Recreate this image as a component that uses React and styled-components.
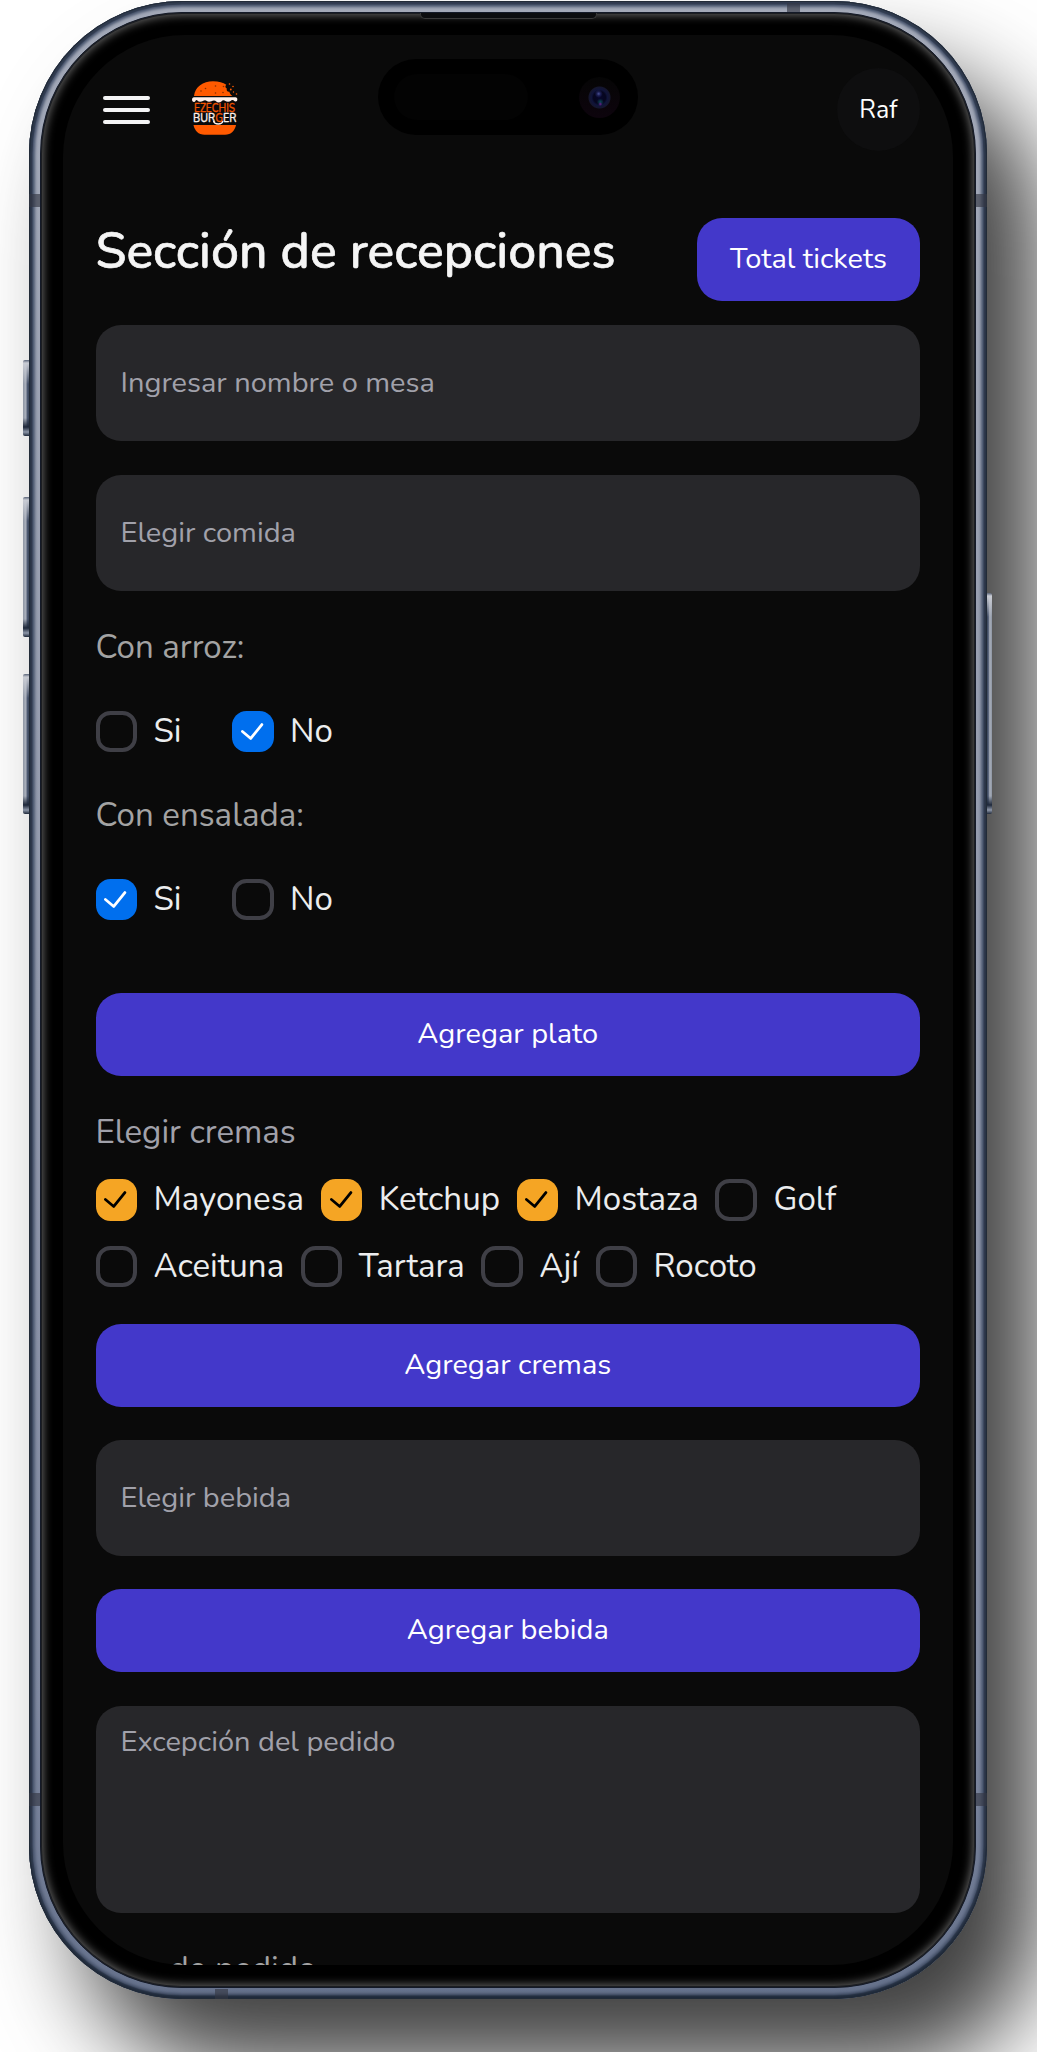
import React, { useState } from "react";
import styled, { createGlobalStyle, css } from "styled-components";

const GlobalStyle = createGlobalStyle`
  *, *::before, *::after { box-sizing: border-box; }
  body {
    margin: 0;
    background: #fff;
    font-family: "Nunito", "Lato", sans-serif;
    color: #ecedee;
  }
  button, input, textarea { font: inherit; }
`;

const Stage = styled.main`
  width: 1037px;
  height: 2052px;
  padding: 1px 50px 52px 29px;
  overflow: hidden;
`;

/* ---------- device ---------- */

const Phone = styled.div`
  position: relative;
  width: 958px;
  height: 1998px;
  padding: 11px;
  border-radius: 153px;
  background: linear-gradient(180deg, #a3a9b8 0%, #9299ac 50%, #8089a0 85%, #66728c 100%);
  box-shadow:
    inset 0 0 0 1px #222b38,
    inset 0 -2px 3px 1px #1d2838,
    inset 0 0 1px 3.5px #313c50,
    inset 0 0 3px 6px #4c5870,
    53px 70px 94px rgba(0, 0, 0, 0.75);
`;

const Bezel = styled.div`
  position: relative;
  height: 100%;
  padding: 22px;
  border: 1px solid #141a28;
  border-radius: 142px;
  background: #000;
  box-shadow: inset 0 0 0 1px #1c1e22, inset 0 0 10px 2px #6a6a6a;
`;

const Screen = styled.div`
  position: relative;
  height: 1930px;
  overflow: hidden;
  border-radius: 122px;
  background: #0a0a0a;
`;

const Antenna = styled.span`
  position: absolute;
  background: rgba(52, 56, 68, 0.65);
  ${({ $side }) => ($side === "top" || $side === "bottom"
    ? css`width: 13px; height: 10px;`
    : css`width: 11px; height: 13px;`)}
  ${({ $side }) => css`${$side}: ${$side === "top" ? 2 : 0}px;`}
  ${({ $side, $at }) => ($side === "top" || $side === "bottom"
    ? css`left: ${$at}px;`
    : css`top: ${$at}px;`)}
`;

const SideKey = styled.span`
  position: absolute;
  top: ${({ $top }) => $top}px;
  height: ${({ $height }) => $height}px;
  width: ${({ $side }) => ($side === "left" ? 6 : 5)}px;
  ${({ $side }) => ($side === "left"
    ? css`left: -6px; border-radius: 2px 0 0 2px;`
    : css`right: -5px; border-radius: 0 2px 2px 0;`)}
  background:
    linear-gradient(180deg, #5a6478 0, #c9ccd4 3px, rgba(201, 204, 212, 0) 24px,
      rgba(30, 40, 58, 0) calc(100% - 18px), #1e283a calc(100% - 9px), #8d96a8 calc(100% - 4px), #1e283a 100%),
    linear-gradient(${({ $side }) => ($side === "left" ? "90deg" : "270deg")}, #8e96a4, #a9afbb 45%, #4c5870 75%, #3a465c);
`;

const Speaker = styled.span`
  position: absolute;
  top: 0;
  left: 379px;
  width: 177px;
  height: 6px;
  border: 1px solid #3a3a3a;
  border-top: 0;
  border-radius: 0 0 5px 5px;
  background: #0c0d0f;
`;

const Island = styled.div`
  position: absolute;
  top: 24px;
  left: 315px;
  display: flex;
  align-items: center;
  justify-content: space-between;
  width: 260px;
  height: 76px;
  padding: 0 18px 0 16px;
  border-radius: 38px;
  background: #000;
`;

const Sensor = styled.span`
  width: 134px;
  height: 46px;
  border-radius: 23px;
  background: #030303;
`;

const Lens = styled.span`
  width: 41px;
  height: 41px;
  border-radius: 50%;
  background:
    radial-gradient(circle at 48% 41%, #4a5196 0, rgba(40, 44, 110, 0.6) 2px, transparent 4px),
    radial-gradient(circle at 52% 66%, #6a1c8c 0, transparent 2px),
    radial-gradient(circle at 52% 61%, #0c4a58 0, transparent 3.5px),
    radial-gradient(circle at 50% 50%, #07072c 0, #06061e 6px, #10143a 8px, #15162e 10.5px, transparent 11.5px),
    linear-gradient(180deg, #050505, #0d040d);
`;

/* ---------- app ---------- */

const Content = styled.div`
  display: flex;
  flex-direction: column;
  padding: 33px 33px 0 32.5px;
`;

const Header = styled.header`
  display: flex;
  align-items: center;
  height: 83px;
  margin-bottom: 66.5px;
`;

const MenuButton = styled.button`
  display: flex;
  flex-direction: column;
  justify-content: space-between;
  width: 47px;
  height: 28px;
  margin: 0 42px 0 7.5px;
  padding: 0;
  border: 0;
  background: none;
`;

const MenuBar = styled.span`
  height: 4px;
  border-radius: 2px;
  background: #f4f4f5;
`;

const Avatar = styled.div`
  display: flex;
  align-items: center;
  justify-content: center;
  width: 83px;
  height: 83px;
  margin-left: auto;
  border-radius: 50%;
  background: #0e0e0f;
  color: #fff;
  font-size: 25px;
`;

const TitleRow = styled.div`
  display: flex;
  align-items: flex-start;
  justify-content: space-between;
  margin-bottom: 24.5px;
`;

const Title = styled.h1`
  margin: 0;
  padding-top: 1px;
  color: #f5f5f5;
  font-size: 50px;
  font-weight: 500;
  line-height: 66.4px;
  -webkit-text-stroke: 0.7px #f5f5f5;
`;

const Button = styled.button`
  height: 83px;
  padding: 0 33px 1px;
  border: 0;
  border-radius: 25px;
  background: #4338ca;
  color: #fff;
  font-size: 29px;
  line-height: 40px;
  ${({ $gap }) => $gap && css`margin-bottom: ${$gap}px;`}
`;

const fieldStyle = css`
  display: block;
  width: 100%;
  margin: 0;
  border: 0;
  border-radius: 25px;
  outline: 0;
  background: #27272a;
  color: #ecedee;
  font-size: 29px;
  &::placeholder { color: #a1a1aa; opacity: 1; }
`;

const Field = styled.input`
  ${fieldStyle}
  height: 116px;
  padding: 0 25px 1px;
  margin-bottom: ${({ $gap }) => $gap}px;
`;

const Notes = styled.textarea`
  ${fieldStyle}
  height: 207px;
  margin-bottom: 32px;
  padding: 15px 25px;
  line-height: 41.4px;
  resize: none;
`;

const Caption = styled.p`
  margin: 0 0 ${({ $gap }) => $gap}px;
  color: ${({ $cool }) => ($cool ? "#a1a1aa" : "#a3a3a3")};
  font-size: 33.1px;
  line-height: 50px;
`;

const ListCaption = styled(Caption)`
  margin-left: -5px;
`;

const Choices = styled.div`
  display: flex;
  flex-wrap: wrap;
  gap: ${({ $row }) => $row || 0}px ${({ $col }) => $col}px;
  margin-bottom: ${({ $gap }) => $gap}px;
`;

const Option = styled.label`
  display: flex;
  align-items: center;
  gap: 16.5px;
  height: 41.5px;
  color: #ecedee;
  font-size: 33.1px;
  line-height: 41.5px;
`;

const HiddenCheck = styled.input`
  position: absolute;
  opacity: 0;
  pointer-events: none;
`;

const Box = styled.span`
  display: flex;
  align-items: center;
  justify-content: center;
  width: 41.5px;
  height: 41.5px;
  border-radius: 14.5px;
  ${({ $on, $tone }) => ($on
    ? css`
        background: ${$tone === "warning" ? "#f5a524" : "#006fee"};
        color: ${$tone === "warning" ? "#000" : "#fff"};
      `
    : css`border: 4px solid #3f3f46;`)}
`;

const LogoMark = styled.svg`
  width: 46px;
  height: 56px;
  margin-bottom: 4px;
  overflow: visible;
`;

function Check({ label, initial, tone }) {
  const [on, setOn] = useState(!!initial);
  return (
    <Option>
      <HiddenCheck type="checkbox" checked={on} onChange={() => setOn(!on)} />
      <Box $on={on} $tone={tone}>
        {on && (
          <svg width="23.7" height="25" viewBox="0 0 17 18" fill="none" stroke="currentColor"
            strokeWidth="2" strokeLinecap="round" strokeLinejoin="round">
            <polyline points="1 9 7 14 15 4" />
          </svg>
        )}
      </Box>
      {label}
    </Option>
  );
}

function Logo() {
  return (
    <LogoMark viewBox="0 0 46 56" aria-label="Ezechis Burger">
      <path d="M2 16C3 7 11 1.3 21 1.3c6 0 10 1.400 13.300 3.400-1.300 1.300-1.200 3 .5 3.800-.6 2.400 1 3.600 2.600 3.300 .2 2 1.800 3.200 3 4.200z" fill="#ff5a00" />
      <g fill="#ff5a00">
        <circle cx="37.500" cy="4" r=".8" /><circle cx="41" cy="6.500" r=".8" />
        <circle cx="38.800" cy="9.500" r=".9" /><circle cx="41.500" cy="12" r=".7" /><circle cx="44.500" cy="14" r=".8" />
      </g>
      <g fill="#8a3000">
        <circle cx="9" cy="11" r=".8" /><circle cx="13.500" cy="8.500" r=".8" />
        <circle cx="23.500" cy="6" r=".8" /><circle cx="23.500" cy="13" r=".8" />
        <circle cx="31" cy="12.500" r=".8" /><circle cx="31.500" cy="6.500" r=".8" />
      </g>
      <path d="M2 17.200H43.500C46 17.200 46 21.500 43.500 21.500 42 21.500 42 20 40.500 20 39 20 38.500 21.800 36 21.800 33.500 21.800 33 20.200 31.500 20.200 30 20.200 29 22.500 26.500 22.500 24.500 22.500 24 20.500 22 20.500 20 20.500 19 21.800 17 21.800 15 21.800 14.500 20.200 13 20.200 11.500 20.200 10.500 21.800 8 21.800 6 21.800 5.500 20 4.500 20 3.500 20 3.500 22 2 22-.6 22-.6 17.200 2 17.200z" fill="#fff1ea" />
      <g fontFamily="Nunito, Lato, sans-serif" fontSize="12.500" fontWeight="500" strokeWidth=".3">
        <text x="2" y="31.500" textLength="41" lengthAdjust="spacingAndGlyphs" fill="#f25500" stroke="#f25500">EZECHIS</text>
        <text x="1" y="42" textLength="43.500" lengthAdjust="spacingAndGlyphs" fill="#fff1ea" stroke="#fff1ea">
          BUR<tspan fill="#f25500" stroke="#f25500">G</tspan>ER
        </text>
      </g>
      <path d="M21.500 41C22.500 45 30 45 31 41" fill="none" stroke="#fff1ea" strokeWidth="1.300" />
      <path d="M1.500 45H44C43 50.500 39 54.800 33 54.800H12.500C6.500 54.800 2.500 50.500 1.500 45z" fill="#ff5a00" />
    </LogoMark>
  );
}

const CREAMS = [
  ["Mayonesa", true], ["Ketchup", true], ["Mostaza", true], ["Golf", false],
  ["Aceituna", false], ["Tartara", false], ["Ají", false], ["Rocoto", false],
];

export default function App() {
  return (
    <>
      <GlobalStyle />
      <Stage>
        <Phone>
          <SideKey $side="left" $top={359} $height={76} />
          <SideKey $side="left" $top={496} $height={140} />
          <SideKey $side="left" $top={673} $height={140} />
          <SideKey $side="right" $top={592} $height={221} />
          <Antenna $side="left" $at={193} />
          <Antenna $side="right" $at={193} />
          <Antenna $side="left" $at={1792} />
          <Antenna $side="right" $at={1792} />
          <Antenna $side="top" $at={758} />
          <Antenna $side="bottom" $at={186} />
          <Bezel>
            <Speaker />
            <Screen>
              <Content>
                <Header>
                  <MenuButton aria-label="Menú">
                    <MenuBar /><MenuBar /><MenuBar />
                  </MenuButton>
                  <Logo />
                  <Avatar>Raf</Avatar>
                </Header>
                <TitleRow>
                  <Title>Sección de recepciones</Title>
                  <Button>Total tickets</Button>
                </TitleRow>
                <Field $gap={33.5} placeholder="Ingresar nombre o mesa" />
                <Field $gap={32.5} placeholder="Elegir comida" />
                <Caption $gap={37.5}>Con arroz:</Caption>
                <Choices $col={50.5} $gap={38.5}>
                  <Check label="Si" />
                  <Check label="No" initial />
                </Choices>
                <Caption $gap={38}>Con ensalada:</Caption>
                <Choices $col={50.5} $gap={72.5}>
                  <Check label="Si" initial />
                  <Check label="No" />
                </Choices>
                <Button $gap={32.5}>Agregar plato</Button>
                <Caption $cool $gap={21}>Elegir cremas</Caption>
                <Choices $col={16.6} $row={25} $gap={36.5}>
                  {CREAMS.map(([label, initial]) => (
                    <Check key={label} label={label} initial={initial} tone="warning" />
                  ))}
                </Choices>
                <Button $gap={33}>Agregar cremas</Button>
                <Field $gap={33.5} placeholder="Elegir bebida" />
                <Button $gap={33.5}>Agregar bebida</Button>
                <Notes placeholder="Excepción del pedido" />
                <ListCaption $gap={0}>Lista de pedido</ListCaption>
              </Content>
              <Island>
                <Sensor />
                <Lens />
              </Island>
            </Screen>
          </Bezel>
        </Phone>
      </Stage>
    </>
  );
}
